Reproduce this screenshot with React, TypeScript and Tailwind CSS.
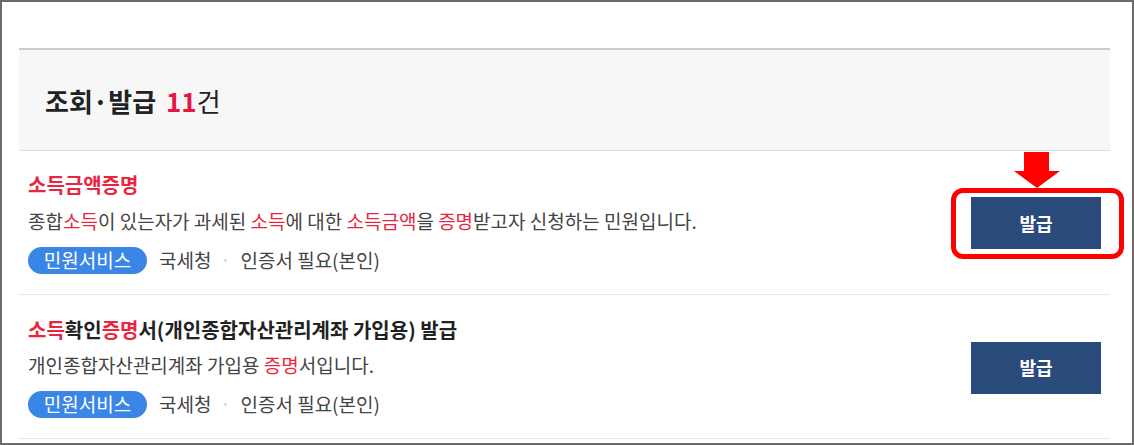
import type { ReactNode } from "react";

const font = { fontFamily: '"Noto Sans CJK KR", "Noto Sans", sans-serif' };

const R = ({ children }: { children: ReactNode }) => <span className="text-[#e8263f]">{children}</span>;

function Meta() {
  return (
    <div className="mt-[13px] flex h-[27px] items-center text-[19px] text-[#444]">
      <span className="flex h-[27px] w-[119px] items-center justify-center rounded-full bg-[#3a86e6] text-white">
        민원서비스
      </span>
      <span className="ml-[12px]">국세청</span>
      <span className="mx-[13px] h-[3px] w-[3px] rounded-full bg-[#d6d6d6]" />
      <span>인증서 필요(본인)</span>
    </div>
  );
}

function IssueButton({ marked }: { marked?: boolean }) {
  return (
    <div className="relative">
      <button className="h-[52px] w-[130px] bg-[#2b4a7c] text-[18px] font-bold text-white">발급</button>
      {marked && (
        <>
          <div className="pointer-events-none absolute -bottom-[10px] -left-[20px] -right-[23px] -top-[9px] rounded-[12px] border-[5px] border-[#ff0000]" />
          <svg className="absolute -top-[45px] left-[43px]" width="46" height="36" viewBox="0 0 46 36">
            <path d="M10 0 H35 V19 H46 L23 36 L0 19 H10 Z" fill="#ff0000" />
          </svg>
        </>
      )}
    </div>
  );
}

export default function App() {
  return (
    <div className="h-[445px] w-[1134px] bg-white" style={font}>
      <div className="h-full w-full border-2 border-[#6b6b6b] pl-[17px] pr-[22px] pt-[46px]">
        <div className="flex h-[103px] items-center border-b border-t-2 border-b-[#ddd] border-t-[#ccc] bg-[#f7f7f7] pl-[26px]">
          <h2 className="text-[26px] font-bold text-[#222]">
            조회·발급 <span className="ml-[4px] text-[#e8163f]">11</span>
            <span className="font-normal">건</span>
          </h2>
        </div>

        <div className="flex items-center justify-between border-b border-[#e6e6e6] pb-[20px] pl-[9px] pr-[9px] pt-[21px]">
          <div>
            <div className="h-[26px] text-[20px] font-bold leading-[26px]">
              <R>소득금액증명</R>
            </div>
            <p className="mt-[10px] h-[26px] text-[19px] leading-[26px] text-[#444]">
              종합<R>소득</R>이 있는자가 과세된 <R>소득</R>에 대한 <R>소득금액</R>을 <R>증명</R>받고자 신청하는 민원입니다.
            </p>
            <Meta />
          </div>
          <IssueButton marked />
        </div>

        <div className="flex items-center justify-between border-b border-[#e6e6e6] pb-[20px] pl-[9px] pr-[9px] pt-[22px]">
          <div>
            <div className="h-[26px] text-[20px] font-bold leading-[26px] text-[#222]">
              <R>소득</R>확인<R>증명</R>서(개인종합자산관리계좌 가입용) 발급
            </div>
            <p className="mt-[9px] h-[26px] text-[19px] leading-[26px] text-[#444]">
              개인종합자산관리계좌 가입용 <R>증명</R>서입니다.
            </p>
            <Meta />
          </div>
          <IssueButton />
        </div>
      </div>
    </div>
  );
}
